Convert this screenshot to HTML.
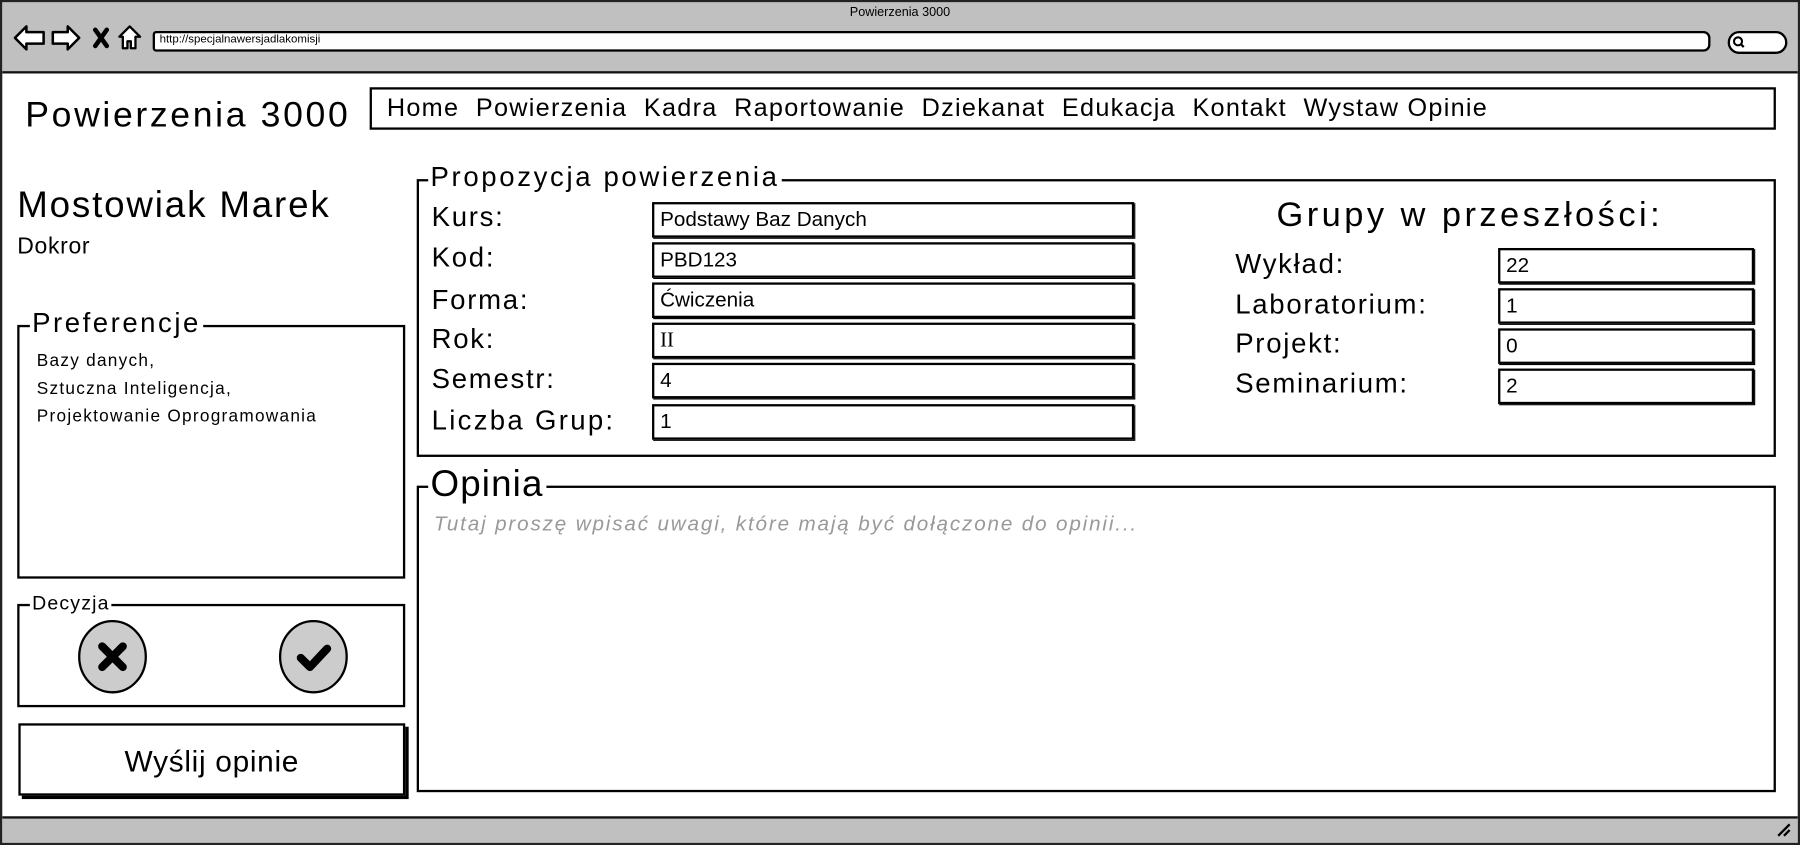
<!DOCTYPE html>
<html><head><meta charset="utf-8">
<style>
html,body{margin:0;padding:0;background:#fff;overflow:hidden;width:1800px;height:845px}
#w{position:absolute;left:0;top:0;width:1568px;height:736px;transform:scale(1.147959,1.148098);transform-origin:0 0;font-family:"Liberation Sans",sans-serif;color:#000}
.a{position:absolute;box-sizing:border-box}
.t{position:absolute;white-space:nowrap;line-height:1}
.b{border:2px solid #000;background:#fff}
.inp{position:absolute;box-sizing:border-box;border:2px solid #000;background:#fff;box-shadow:1px 1px 0 #000;font-size:18px;padding-left:5px;line-height:26px}
.lg{position:absolute;background:#fff;padding:0 2px;line-height:1;white-space:nowrap}
.lb{font-size:24px;letter-spacing:1.5px}
</style></head><body>
<div id="w">
<div class="a" style="left:0;top:0;width:1568px;height:736px;border:2px solid #222;"></div>
<div class="a" style="left:2px;top:2px;width:1564px;height:62px;background:#c0c0c0;border-bottom:2px solid #111"></div>
<div class="t" style="left:0;width:1568px;text-align:center;top:6px;font-size:11px">Powierzenia 3000</div>
<svg class="a" style="left:10px;top:20px" width="120" height="26" viewBox="0 0 120 26">
<path d="M3 13 L13 3 L13 8 L28 8 L28 18 L13 18 L13 23 Z" fill="#fff" stroke="#000" stroke-width="2.2" stroke-linejoin="round"/>
<path d="M59 13 L49 3 L49 8 L36 8 L36 18 L49 18 L49 23 Z" fill="#fff" stroke="#000" stroke-width="2.2" stroke-linejoin="round"/>
<path d="M73 6 L83 20 M83 6 L73 20" stroke="#000" stroke-width="4" stroke-linecap="round"/>
<path d="M94 12 L103 3 L112 12 L108 12 L108 22 L104 22 L104 16 L101 16 L101 22 L97 22 L97 12 Z" fill="#fff" stroke="#000" stroke-width="2" stroke-linejoin="round"/>
</svg>
<div class="a" style="left:133px;top:27px;width:1357px;height:18px;background:#fff;border:2px solid #000;border-radius:3px 6px 6px 3px"></div>
<div class="t" style="left:139px;top:30px;font-size:10px">http://specjalnawersjadlakomisji</div>
<div class="a" style="left:1505px;top:27px;width:52px;height:20px;background:#fff;border:2px solid #000;border-radius:10px"></div>
<svg class="a" style="left:1508px;top:30px" width="14" height="14"><circle cx="6" cy="6" r="3.5" fill="none" stroke="#000" stroke-width="1.8"/><path d="M8 8 L11 11" stroke="#000" stroke-width="2"/></svg>
<div class="a" style="left:2px;top:711px;width:1564px;height:23px;background:#c0c0c0;border-top:2px solid #111"></div>
<svg class="a" style="left:1547px;top:716px" width="14" height="14"><path d="M2 12 L12 2 M7 12 L12 7" stroke="#000" stroke-width="2"/></svg>

<div class="t" style="left:22px;top:84px;font-size:31px;letter-spacing:2.3px">Powierzenia 3000</div>
<div class="a b" style="left:322px;top:76px;width:1225px;height:37px"></div>
<div class="t" style="left:337px;top:83px;font-size:22px;letter-spacing:1.1px">Home&nbsp; Powierzenia&nbsp; Kadra&nbsp; Raportowanie&nbsp; Dziekanat&nbsp; Edukacja&nbsp; Kontakt&nbsp; Wystaw Opinie</div>

<div class="t" style="left:15px;top:162px;font-size:32px;letter-spacing:1.6px">Mostowiak Marek</div>
<div class="t" style="left:15px;top:205px;font-size:20px;letter-spacing:0.6px">Dokror</div>

<div class="a b" style="left:15px;top:283px;width:338px;height:221px"></div>
<div class="lg" style="left:26px;top:270px;font-size:24px;letter-spacing:2.2px">Preferencje</div>
<div class="t" style="left:32px;top:303px;font-size:15px;line-height:24px;white-space:pre;letter-spacing:1.1px">Bazy danych,
Sztuczna Inteligencja,
Projektowanie Oprogramowania</div>

<div class="a b" style="left:15px;top:526px;width:338px;height:90px"></div>
<div class="lg" style="left:26px;top:517px;font-size:17px;letter-spacing:1px">Decyzja</div>
<svg class="a" style="left:66px;top:540px" width="240" height="66">
<ellipse cx="32" cy="32" rx="29" ry="31" fill="#ccc" stroke="#000" stroke-width="2"/>
<path d="M23 23 L41 41 M41 23 L23 41" stroke="#000" stroke-width="7" stroke-linecap="round"/>
<ellipse cx="207" cy="32" rx="29" ry="31" fill="#ccc" stroke="#000" stroke-width="2"/>
<path d="M196 33 L204 41 L219 25" fill="none" stroke="#000" stroke-width="7" stroke-linecap="round" stroke-linejoin="round"/>
</svg>

<div class="a b" style="left:16px;top:630px;width:337px;height:63px;box-shadow:3px 3px 0 #000"></div>
<div class="t" style="left:16px;width:337px;text-align:center;top:650px;font-size:26px;letter-spacing:0.6px">Wyślij opinie</div>

<div class="a b" style="left:363px;top:156px;width:1184px;height:242px"></div>
<div class="lg" style="left:373px;top:143px;font-size:24px;letter-spacing:2.3px">Propozycja powierzenia</div>
<div class="t lb" style="left:376px;top:178px">Kurs:</div>
<div class="t lb" style="left:376px;top:213px">Kod:</div>
<div class="t lb" style="left:376px;top:250px">Forma:</div>
<div class="t lb" style="left:376px;top:284px">Rok:</div>
<div class="t lb" style="left:376px;top:319px">Semestr:</div>
<div class="t lb" style="left:376px;top:355px;letter-spacing:2px">Liczba Grup:</div>
<div class="inp" style="left:568px;top:176px;width:420px;height:31px">Podstawy Baz Danych</div>
<div class="inp" style="left:568px;top:211px;width:420px;height:31px">PBD123</div>
<div class="inp" style="left:568px;top:246px;width:420px;height:31px">Ćwiczenia</div>
<div class="inp" style="left:568px;top:281px;width:420px;height:31px;font-family:'Liberation Serif',serif">II</div>
<div class="inp" style="left:568px;top:316px;width:420px;height:31px">4</div>
<div class="inp" style="left:568px;top:352px;width:420px;height:31px">1</div>

<div class="t" style="left:1112px;top:173px;font-size:30px;letter-spacing:3px">Grupy w przeszłości:</div>
<div class="t lb" style="left:1076px;top:219px">Wykład:</div>
<div class="t lb" style="left:1076px;top:254px">Laboratorium:</div>
<div class="t lb" style="left:1076px;top:288px">Projekt:</div>
<div class="t lb" style="left:1076px;top:323px">Seminarium:</div>
<div class="inp" style="left:1305px;top:216px;width:223px;height:31px">22</div>
<div class="inp" style="left:1305px;top:251px;width:223px;height:31px">1</div>
<div class="inp" style="left:1305px;top:286px;width:223px;height:31px">0</div>
<div class="inp" style="left:1305px;top:321px;width:223px;height:31px">2</div>

<div class="a b" style="left:363px;top:423px;width:1184px;height:267px"></div>
<div class="lg" style="left:373px;top:405px;font-size:32px;letter-spacing:1px">Opinia</div>
<div class="t" style="left:378px;top:447px;font-size:18px;font-style:italic;color:#999;letter-spacing:1.6px">Tutaj proszę wpisać uwagi, które mają być dołączone do opinii...</div>
</div>
</body></html>
